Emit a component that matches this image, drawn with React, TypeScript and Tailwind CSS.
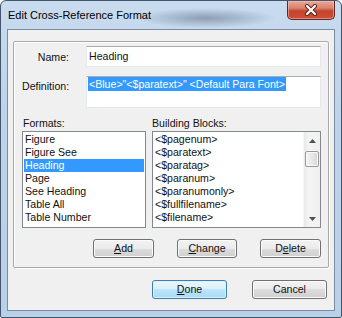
import React from "react";

function CloseBtn() {
  return (
    <div className="w-[48px] h-[19px] rounded-b-[5px] border border-t-0 border-[#5d2a22] bg-[linear-gradient(180deg,#e9a99a_0%,#d9806d_40%,#c5452f_55%,#c94f36_100%)] shadow-[inset_0_0_0_1px_rgba(255,200,190,0.5)] flex items-center justify-center">
      <svg width="14" height="12" viewBox="0 0 14 12">
        <path d="M3 2 L11 10 M11 2 L3 10" stroke="#5a1f16" strokeWidth="4" strokeLinecap="round" />
        <path d="M3 2 L11 10 M11 2 L3 10" stroke="#ffffff" strokeWidth="2.2" strokeLinecap="round" />
      </svg>
    </div>
  );
}

function Btn({ children, primary, w }: { children: React.ReactNode; primary?: boolean; w: string }) {
  return (
    <div
      className={
        "h-[19px] rounded-[3px] border flex items-center justify-center leading-[13px] " +
        w +
        " " +
        (primary
          ? "border-[#3c7fb1] bg-[linear-gradient(180deg,#eaf6fd_0%,#d9f0fc_50%,#bee6fd_50%,#a7d9f5_100%)] shadow-[inset_0_0_0_1px_#dff2fc]"
          : "border-[#707070] bg-[linear-gradient(180deg,#f2f2f2_0%,#ebebeb_50%,#dddddd_50%,#cfcfcf_100%)] shadow-[inset_0_0_0_1px_#fbfbfb]")
      }
    >
      {children}
    </div>
  );
}

const formats = ["Figure", "Figure See", "Heading", "Page", "See Heading", "Table All", "Table Number"];
const blocks = ["<$pagenum>", "<$paratext>", "<$paratag>", "<$paranum>", "<$paranumonly>", "<$fullfilename>", "<$filename>"];

export default function App() {
  return (
    <div className="w-[342px] h-[318px] font-['Liberation_Sans',Arial,sans-serif] text-[10.6px] text-[#111111]">
      <div className="w-full h-full flex flex-col border border-[#45566a] rounded-t-[6px] rounded-b-[2px] bg-[linear-gradient(180deg,#c8dbef_0%,#bdd3eb_40%,#b9d0e9_100%)] overflow-hidden">
        <div className="h-[28px] flex items-start justify-between pl-[7px] pr-[6px] bg-[radial-gradient(ellipse_70px_10px_at_205px_17px,rgba(70,85,105,0.45),transparent)]">
          <span className="mt-[7px] leading-[14px] text-[11px] text-black">Edit Cross-Reference Format</span>
          <CloseBtn />
        </div>
        <div className="flex-1 mx-[6px] mb-[6px] border border-[#7b8ba0] bg-[#f0f0f0] flex flex-col">
          <div className="mt-[11px] ml-[5px] mr-[5px] border border-[#a9a9a9] rounded-[2px] shadow-[inset_1px_1px_0_#ffffff,1px_1px_0_#ffffff] pt-[4px] pl-[8px] pr-[7px] pb-[9px] flex flex-col">
            <div className="flex items-start h-[21px]">
              <div className="w-[47px] text-right pt-[5px] leading-[13px]">Name:</div>
              <div className="ml-[17px] flex-1 h-[21px] bg-white border border-[#e3e9ef] border-t-[#abadb3] flex items-center pl-[2px] leading-[13px]">
                Heading
              </div>
            </div>
            <div className="flex items-start mt-[9px] h-[32px]">
              <div className="w-[47px] text-right pt-[4px] leading-[13px]">Definition:</div>
              <div className="ml-[17px] flex-1 h-[32px] bg-white border border-[#e3e9ef] border-t-[#abadb3] pl-[1px] leading-[14px]">
                <span className="bg-[#3399ff] text-white inline-block leading-[14px] pl-[1px] pr-[1px]">
                  {'<Blue>"<$paratext>" <Default Para Font>'}
                </span>
              </div>
            </div>
            <div className="flex mt-[9px] h-[14px] leading-[13px] gap-[6px]">
              <div className="w-[124px] pl-[1px]">Formats:</div>
              <div className="flex-1">Building Blocks:</div>
            </div>
            <div className="flex gap-[6px] h-[97px]">
              <div className="w-[124px] h-[97px] border border-[#828790] bg-white pt-[1px]">
                {formats.map((f, i) => (
                  <div
                    key={f}
                    className={
                      "h-[13px] leading-[13px] mx-[1px] pl-[1px] whitespace-nowrap " +
                      (i === 2 ? "bg-[#3399ff] text-white" : "")
                    }
                  >
                    {f}
                  </div>
                ))}
              </div>
              <div className="flex-1 h-[97px] border border-[#828790] bg-white flex">
                <div className="flex-1 pt-[1px] pl-[2px] overflow-hidden">
                  {blocks.map((b) => (
                    <div key={b} className="h-[13px] leading-[13px] whitespace-nowrap">
                      {b}
                    </div>
                  ))}
                </div>
                <div className="w-[17px] h-full bg-[linear-gradient(90deg,#e8e8e8_0%,#f4f4f4_30%,#f0f0f0_100%)] border-l border-[#f7f7f7] flex flex-col">
                  <div className="h-[17px] flex items-center justify-center">
                    <svg width="7" height="4" viewBox="0 0 7 4">
                      <path d="M3.5 0 L7 4 L0 4 Z" fill="#4f4f4f" />
                    </svg>
                  </div>
                  <div className="mt-[2px] mx-[1px] h-[16px] rounded-[2px] border border-[#999999] bg-[linear-gradient(90deg,#f3f3f3_0%,#e8e8e8_50%,#d6d6d6_100%)] shadow-[inset_0_0_0_1px_#fafafa]" />
                  <div className="flex-1" />
                  <div className="h-[17px] flex items-center justify-center">
                    <svg width="7" height="4" viewBox="0 0 7 4">
                      <path d="M0 0 L7 0 L3.5 4 Z" fill="#4f4f4f" />
                    </svg>
                  </div>
                </div>
              </div>
            </div>
            <div className="flex justify-end gap-[23px] mt-[11px]">
              <Btn w="w-[61px]">
                <span className="underline underline-offset-[1px]">A</span>dd
              </Btn>
              <Btn w="w-[60px]">
                <span className="underline underline-offset-[1px]">C</span>hange
              </Btn>
              <Btn w="w-[61px]">
                D<span className="underline underline-offset-[1px]">e</span>lete
              </Btn>
            </div>
          </div>
          <div className="flex justify-end gap-[25px] mt-[12px] pr-[7px]">
            <Btn w="w-[75px]" primary>
              <span className="underline underline-offset-[1px]">D</span>one
            </Btn>
            <Btn w="w-[75px]">Cancel</Btn>
          </div>
        </div>
      </div>
    </div>
  );
}
